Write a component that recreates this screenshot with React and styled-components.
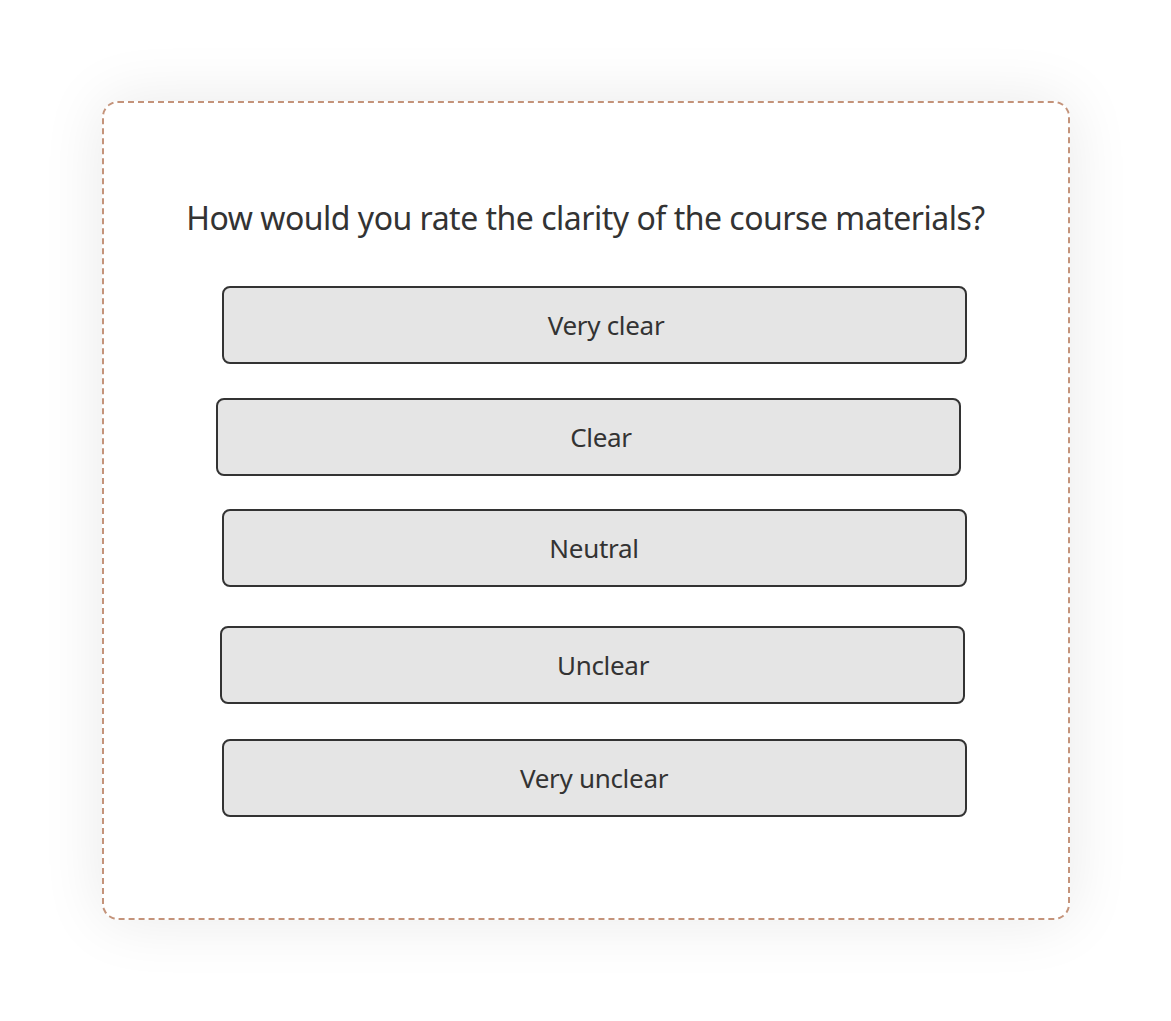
import styled, { createGlobalStyle } from 'styled-components';

const GlobalStyle = createGlobalStyle`
  html, body {
    margin: 0;
    padding: 0;
    background: #ffffff;
  }
  body {
    font-family: "Source Sans Pro", "Noto Sans", "Liberation Sans", sans-serif;
    color: #333333;
  }
`;

const Page = styled.div`
  padding: 101px 0 102px;
  display: flex;
  justify-content: center;
`;

const Card = styled.div`
  box-sizing: border-box;
  width: 968px;
  height: 819px;
  border: 2px dashed #c4937a;
  border-radius: 16px;
  background: #ffffff;
  box-shadow: 0 0 64px rgba(0, 0, 0, 0.09);
  display: flex;
  flex-direction: column;
  align-items: center;
  padding-top: 95px;
`;

const Question = styled.h1`
  margin: 0 0 48px;
  font-size: 32px;
  font-weight: 400;
  letter-spacing: -0.5px;
  line-height: 40px;
  color: #333333;
`;

const Options = styled.div`
  display: flex;
  flex-direction: column;
  align-items: flex-start;
  width: 100%;
`;

const Option = styled.button`
  box-sizing: border-box;
  width: 745px;
  height: 78px;
  margin-left: ${p => p.$x}px;
  margin-top: ${p => p.$gap}px;
  padding: 0 0 0 ${p => p.$shift}px;
  border: 2px solid #333333;
  border-radius: 8px;
  background: #e5e5e5;
  font-family: inherit;
  font-size: 26px;
  letter-spacing: -0.3px;
  color: #333333;
  cursor: pointer;
`;

const options = [
  { label: 'Very clear', x: 118, gap: 0, shift: 24 },
  { label: 'Clear', x: 112, gap: 34, shift: 26 },
  { label: 'Neutral', x: 118, gap: 33, shift: 0 },
  { label: 'Unclear', x: 116, gap: 39, shift: 22 },
  { label: 'Very unclear', x: 118, gap: 35, shift: 0 },
];

export default function App() {
  return (
    <>
      <GlobalStyle />
      <Page>
        <Card>
          <Question>How would you rate the clarity of the course materials?</Question>
          <Options>
            {options.map(o => (
              <Option key={o.label} $x={o.x} $gap={o.gap} $shift={o.shift}>
                {o.label}
              </Option>
            ))}
          </Options>
        </Card>
      </Page>
    </>
  );
}
